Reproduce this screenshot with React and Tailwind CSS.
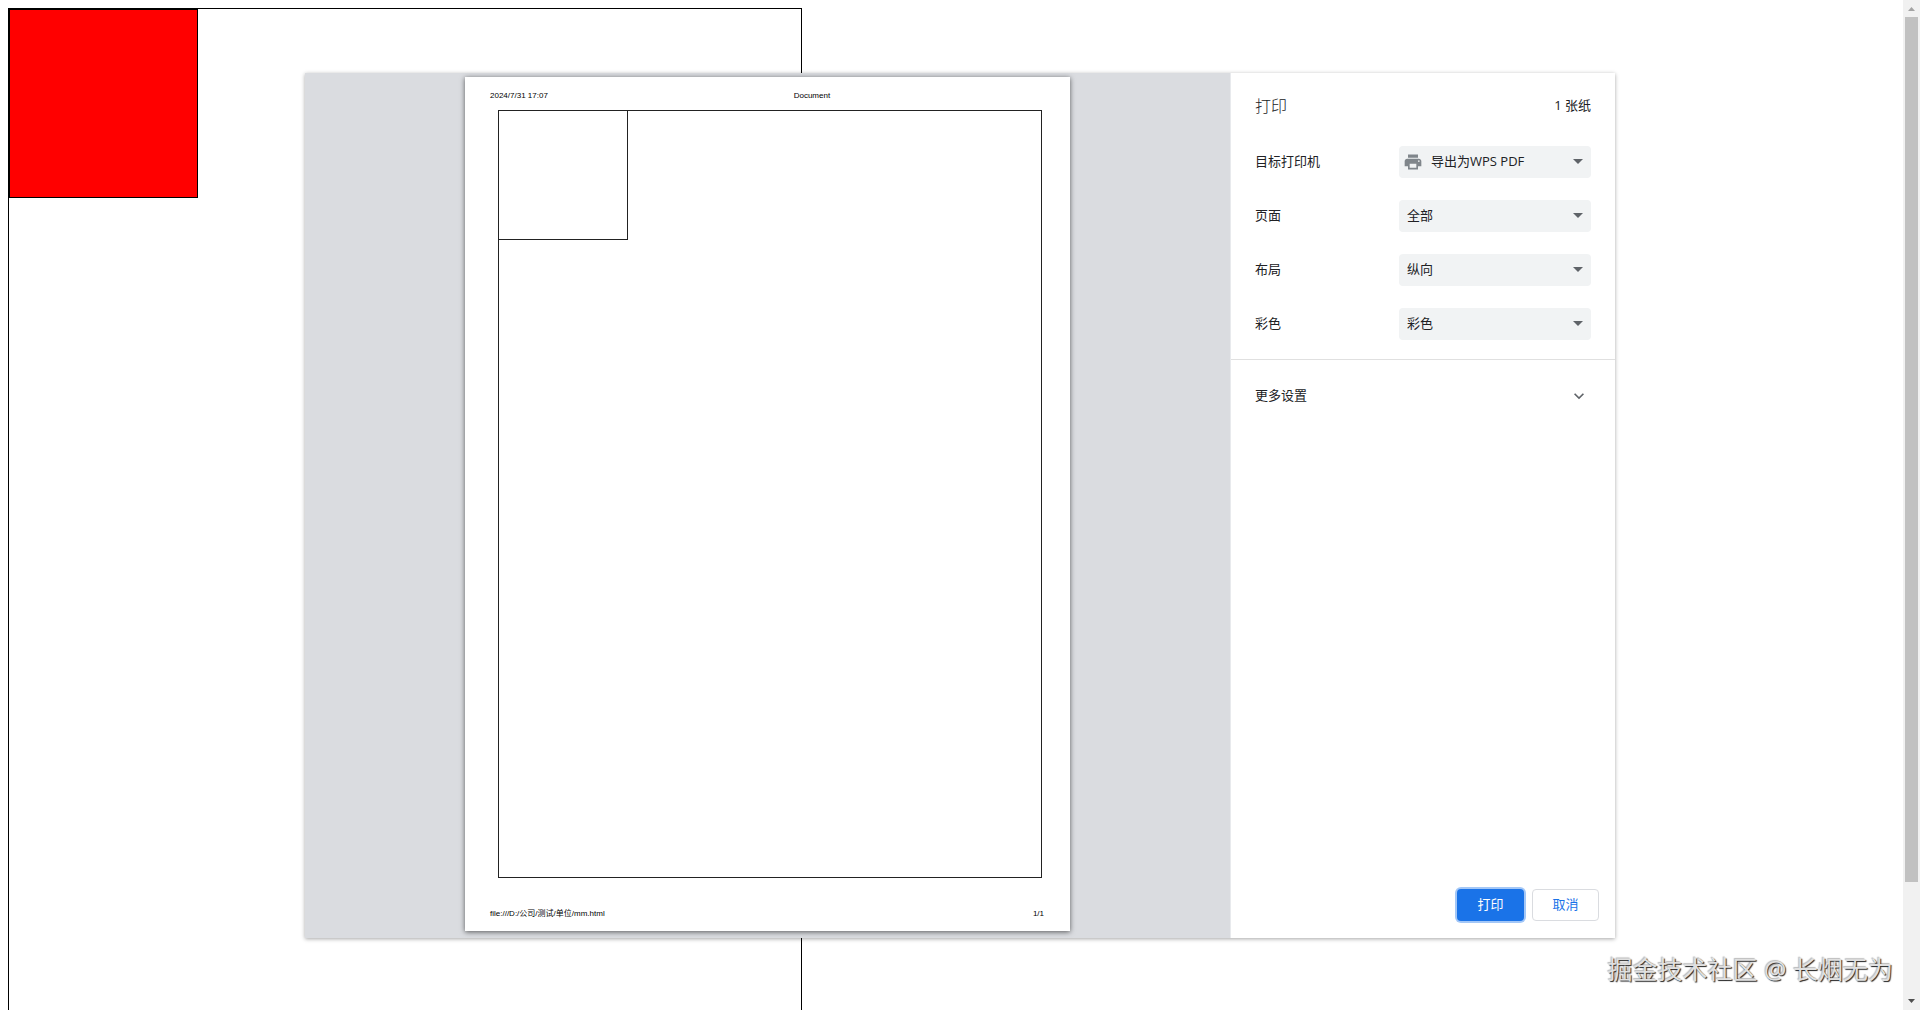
import React, { useState } from 'react';
import { MdPrint, MdArrowDropDown, MdExpandMore } from 'react-icons/md';

const campos = [
    { id: 'printer', label: '目标打印机', options: ['导出为WPS PDF', '另存为 PDF'], icon: true },
    { id: 'pages', label: '页面', options: ['全部', '自定义'] },
    { id: 'layout', label: '布局', options: ['纵向', '横向'] },
    { id: 'color', label: '彩色', options: ['彩色', '黑白'] },
];

function SettingRow({ campo }) {
    const [value, setValue] = useState(campo.options[0]);

    return (
        <div className="flex h-[54px] items-center justify-between">
            <label htmlFor={campo.id}>{campo.label}</label>
            <div className="relative w-48">
                {campo.icon && (
                    <MdPrint size={20} className="pointer-events-none absolute left-1 top-1.5 text-[#80868b]" />
                )}
                <select
                    id={campo.id}
                    value={value}
                    onChange={e => setValue(e.target.value)}
                    className={`block h-8 w-full appearance-none rounded bg-[#f1f3f4] pr-7 outline-none ${campo.icon ? 'pl-8' : 'pl-2'}`}
                >
                    {campo.options.map(o => (
                        <option key={o} value={o}>{o}</option>
                    ))}
                </select>
                <MdArrowDropDown size={24} className="pointer-events-none absolute right-px top-[3px] text-[#5f6368]" />
            </div>
        </div>
    );
}

function Preview() {
    return (
        <section className="flex min-w-0 flex-1 justify-center bg-[#dadce0] pt-1 pb-[7px]">
            <div className="flex aspect-[605/854] h-full flex-col bg-white font-['Liberation_Sans','Noto_Sans_CJK_SC',sans-serif] text-[8px] leading-3 text-black shadow-[0_1px_5px_rgba(0,0,0,0.6)]">
                <header className="grid h-[33px] grid-cols-3 pt-[13px] pr-[26px] pl-[25px]">
                    <span>2024/7/31 17:07</span>
                    <span className="pl-[119px]">Document</span>
                </header>
                <div className="mr-7 ml-[33px] flex-1 border border-[#222]">
                    <div className="size-[129px] border-r border-b border-[#222]" />
                </div>
                <footer className="flex h-[53px] items-center justify-between pt-[18px] pr-[26px] pl-[25px]">
                    <span>file:///D:/公司/测试/单位/mm.html</span>
                    <span>1/1</span>
                </footer>
            </div>
        </section>
    );
}

function Sidebar() {
    return (
        <aside className="flex w-[385px] flex-col border-l border-[#e8eaed] bg-white">
            <header className="flex h-[62px] items-center justify-between pt-1 pr-6 pl-6">
                <h1 className="text-base font-light">打印</h1>
                <span>1 张纸</span>
            </header>
            <div className="border-b border-[#e0e0e0] pr-6 pb-2 pl-6">
                {campos.map(c => <SettingRow key={c.id} campo={c} />)}
            </div>
            <button type="button" className="flex h-[72px] items-center justify-between pr-[26px] pl-6">
                <span>更多设置</span>
                <MdExpandMore size={20} className="text-[#5f6368]" />
            </button>
            {/* Acciones */}
            <div className="mt-auto flex justify-end gap-2 pr-4 pb-[17px]">
                <button type="button" className="h-8 w-[67px] rounded bg-[#1a73e8] text-white ring-2 ring-[#a3c7f7]">打印</button>
                <button type="button" className="h-8 w-[67px] rounded border border-[#dadce0] text-[#1a73e8]">取消</button>
            </div>
        </aside>
    );
}

export default function App() {
    return (
        <div className="relative flex h-screen overflow-hidden bg-white font-['Open_Sans','Noto_Sans_CJK_SC',sans-serif] text-[13px] text-[#202124]">
            {/* Documento de fondo */}
            <main className="min-w-0 flex-1 overflow-hidden pt-2 pl-2">
                <div className="h-[1123px] w-[794px] border border-black">
                    <div className="size-[189px] border border-black bg-[#ff0000]" />
                </div>
            </main>

            {/* Barra de scroll */}
            <div className="flex w-[17px] flex-col items-center bg-[#f1f1f1]">
                <svg viewBox="0 0 17 17" className="size-[17px]"><path d="M5 11h7L8.500 7z" fill="#a3a3a3" /></svg>
                <div className="h-[865px] w-[13px] bg-[#c1c1c1]" />
                <svg viewBox="0 0 17 17" className="mt-auto size-[17px]"><path d="M5 6h7L8.500 10z" fill="#505050" /></svg>
            </div>

            <div role="dialog" aria-label="打印" className="absolute inset-x-[305px] top-[73px] bottom-18 flex shadow-[0_1px_4px_rgba(0,0,0,0.35)]">
                <Preview />
                <Sidebar />
            </div>

            <p className="absolute right-[27px] bottom-[21px] text-[25px] leading-10 text-[#e0e0e0] [text-shadow:1px_1px_1px_#222,-1px_-1px_1px_#bbb]">掘金技术社区 @ 长烟无为</p>
        </div>
    );
}
